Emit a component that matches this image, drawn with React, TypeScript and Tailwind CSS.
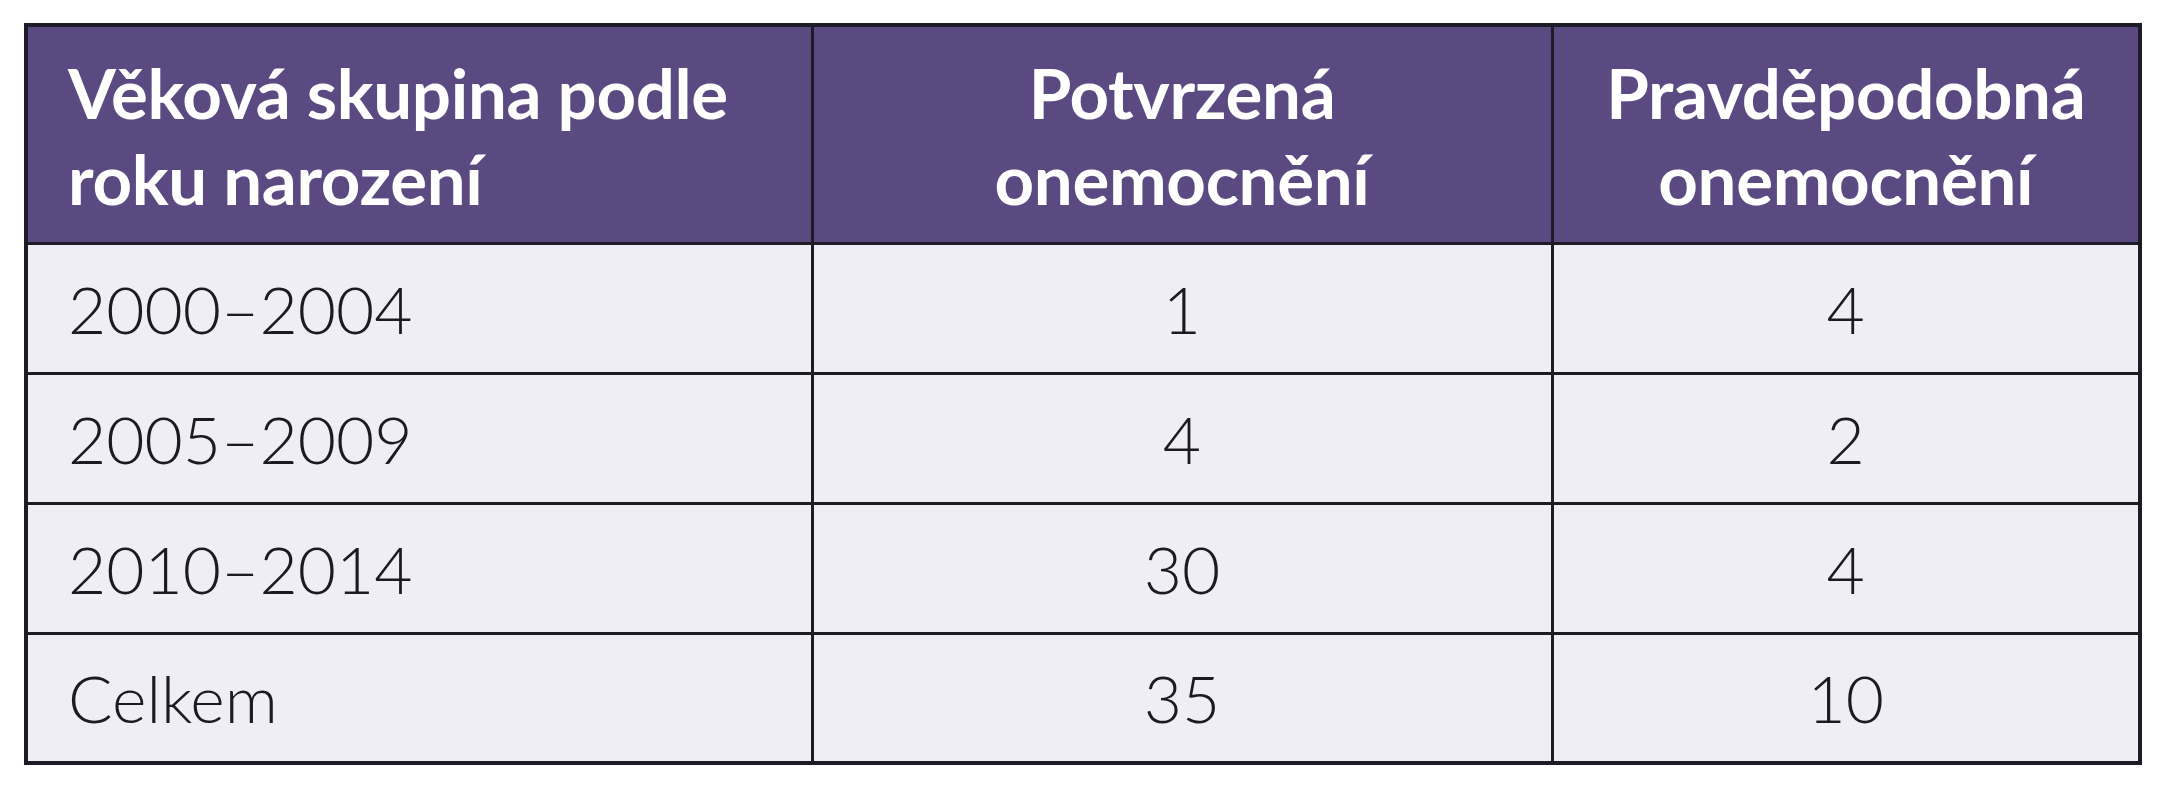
import React from "react";

const rows = [
  ["2000–2004", "1", "4"],
  ["2005–2009", "4", "2"],
  ["2010–2014", "30", "4"],
  ["Celkem", "35", "10"],
];

export default function App() {
  return (
    <div
      className="w-[2164px] h-[800px] bg-white pl-[24px] pt-[23px]"
      style={{ fontFamily: "Lato, 'Noto Sans', sans-serif" }}
    >
      <table className="border-collapse border-[4px] border-[#1d1b26] table-fixed w-[2114px]">
        <colgroup>
          <col className="w-[786px]" />
          <col className="w-[740px]" />
          <col className="w-[588px]" />
        </colgroup>
        <thead>
          <tr className="h-[218px] bg-[#5b4a81] text-white">
            <th className="border-[3px] border-[#1d1b26] text-left align-middle pl-[40px] pt-[4px] text-[69px] font-bold leading-[86px] whitespace-nowrap tracking-[-0.005em]">
              Věková skupina podle
              <br />
              roku narození
            </th>
            <th className="border-[3px] border-[#1d1b26] text-center align-middle pt-[4px] text-[69px] font-bold leading-[86px] tracking-[-0.005em]">
              Potvrzená
              <br />
              onemocnění
            </th>
            <th className="border-[3px] border-[#1d1b26] text-center align-middle pt-[4px] text-[69px] font-bold leading-[86px] tracking-[-0.005em]">
              Pravděpodobná
              <br />
              onemocnění
            </th>
          </tr>
        </thead>
        <tbody>
          {rows.map((r) => (
            <tr key={r[0]} className="h-[130px] bg-[#efeef5] text-[#1b1a20]">
              <td className="border-[3px] border-[#1d1b26] pl-[40px] text-[66px] font-light align-middle">
                {r[0]}
              </td>
              <td className="border-[3px] border-[#1d1b26] text-center text-[66px] font-light align-middle">
                {r[1]}
              </td>
              <td className="border-[3px] border-[#1d1b26] text-center text-[66px] font-light align-middle">
                {r[2]}
              </td>
            </tr>
          ))}
        </tbody>
      </table>
    </div>
  );
}
